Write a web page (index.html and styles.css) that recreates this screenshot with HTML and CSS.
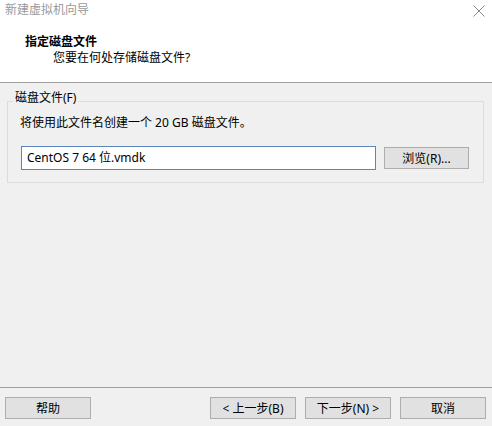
FILE: index.html
```html
<!DOCTYPE html>
<html lang="zh-CN">
<head>
<meta charset="utf-8">
<title>新建虚拟机向导</title>
<link rel="stylesheet" href="styles.css">
</head>
<body>
<div class="window">
  <div class="header">
    <div class="titlebar">
      <span class="title">新建虚拟机向导</span>
      <svg class="close" width="12" height="12" viewBox="0 0 12 12"><path d="M0.5 0.5L11.5 11.5M11.5 0.5L0.5 11.5" stroke="#8a8a8a" stroke-width="1" fill="none"/></svg>
    </div>
    <div class="heading">指定磁盘文件</div>
    <div class="subheading">您要在何处存储磁盘文件?</div>
  </div>
  <div class="main">
    <div class="group">
      <span class="legend">磁盘文件(F)</span>
      <div class="desc">将使用此文件名创建一个 20 GB 磁盘文件。</div>
      <div class="row">
        <div class="input">CentOS 7 64 位.vmdk</div>
        <button class="btn browse">浏览(R)...</button>
      </div>
    </div>
  </div>
  <div class="footer">
    <button class="btn">帮助</button>
    <div class="spacer"></div>
    <button class="btn">&lt; 上一步(B)</button>
    <button class="btn">下一步(N) &gt;</button>
    <button class="btn">取消</button>
  </div>
</div>
</body>
</html>
```
FILE: styles.css
```css
html, body {
  margin: 0;
  padding: 0;
}
body {
  width: 492px;
  height: 426px;
  overflow: hidden;
  background: #f0f0f0;
  font-family: "Noto Sans", "Noto Sans CJK SC", "Microsoft YaHei", sans-serif;
  font-size: 12px;
  line-height: 16px;
  color: #000;
}
.window {
  display: flex;
  flex-direction: column;
  height: 426px;
}
.header {
  height: 82px;
  background: #fff;
  border-bottom: 1px solid #a0a0a0;
  box-sizing: content-box;
}
.titlebar {
  height: 20px;
  display: flex;
  align-items: center;
  justify-content: space-between;
  padding: 0 7px 0 5px;
}
.title {
  color: #999;
  line-height: 20px;
}
.close {
  margin-top: 1px;
}
.heading {
  margin-top: 14px;
  padding-left: 25px;
  font-weight: bold;
}
.subheading {
  padding-left: 53px;
}
.main {
  flex: 1;
}
.group {
  position: relative;
  margin: 18px 0 0 7px;
  width: 477px;
  height: 82px;
  box-sizing: border-box;
  border: 1px solid #dcdcdc;
  padding: 13px 0 0 12px;
}
.legend {
  position: absolute;
  top: -12px;
  left: 5px;
  padding: 0 2px;
  background: #f0f0f0;
}
.row {
  display: flex;
  align-items: flex-start;
  margin: 15px 0 0 1px;
}
.input {
  width: 355px;
  height: 24px;
  box-sizing: border-box;
  border: 1px solid #5a86bb;
  background: #fff;
  padding-left: 5px;
  line-height: 21px;
}
.btn {
  font: inherit;
  color: #000;
  width: 86px;
  height: 22px;
  box-sizing: border-box;
  border: 1px solid #adadad;
  background: #e1e1e1;
  padding: 0;
  line-height: 19px;
  text-align: center;
}
.browse {
  width: 85px;
  margin: 1px 0 0 8px;
}
.footer {
  display: flex;
  gap: 9px;
  border-top: 1px solid #a0a0a0;
  padding: 9px 6px 7px 5px;
}
.spacer {
  flex: 1;
}
```
